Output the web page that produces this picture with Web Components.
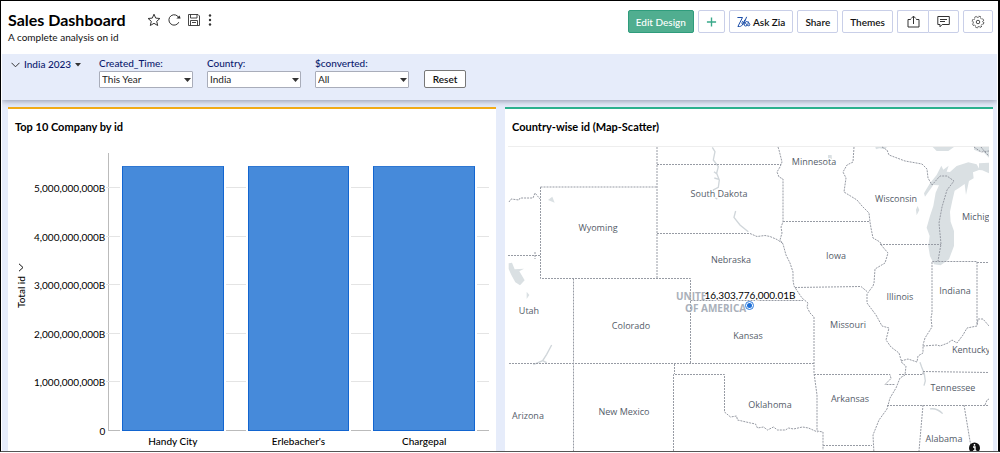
<!DOCTYPE html>
<html lang="en">
<head>
<meta charset="utf-8">
<meta name="viewport" content="width=device-width, initial-scale=1">
<title>Sales Dashboard</title>
<style>
  body {
    margin: 0;
    font-family: Lato, "Open Sans", sans-serif;
    font-size: 10px;
    color: #111;
    background: #fff;
  }
</style>
</head>
<body>
<sales-dashboard></sales-dashboard>

<script>
/**
 * Attaches an open shadow root filled with the given markup.
 * @param {HTMLElement} host - The element that gets the shadow root.
 * @param {string} html - Styles and markup.
 */
function fillShadow (host, html) {
  const template = document.createElement('template');
  template.innerHTML = html;
  host.attachShadow({ mode: 'open' }).appendChild(template.content.cloneNode(true));
}

/**
 * @class ToolButton
 * @classdesc Outlined header button, its icon or text is slotted.
 */
class ToolButton extends HTMLElement {
  constructor () {
    super();
    fillShadow(this, `
    <style>
      :host { display: block; }

      button {
        box-sizing: border-box;
        display: flex;
        align-items: center;
        justify-content: center;
        gap: 2px;
        width: 100%;
        height: 23px;
        padding: 0 7px;
        font: inherit;
        font-weight: 600;
        color: #111;
        background: #fff;
        border: 1px solid #c9cfe8;
        border-radius: 2px;
        white-space: nowrap;
        cursor: pointer;
      }

      :host([primary]) button {
        font-weight: 500;
        color: #fff;
        background: #50ae90;
        border-color: #2f9c7c;
      }

      :host([joined=start]) button { border-radius: 2px 0 0 2px; border-right: 0; }
      :host([joined=end]) button { border-radius: 0 2px 2px 0; }
    </style>
    <button type="button"><slot></slot></button>`);
  }

  connectedCallback () {
    if (this.hasAttribute('label')) {
      this.shadowRoot.querySelector('button').setAttribute('aria-label', this.getAttribute('label'));
    }
  }
}

/**
 * @class DashboardHeader
 * @classdesc Title, description and the toolbar.
 */
class DashboardHeader extends HTMLElement {
  constructor () {
    super();
    fillShadow(this, `
    <style>
      :host {
        display: flex;
        justify-content: space-between;
        align-items: flex-start;
        padding: 9px 5px 8px 7px;
      }

      .heading { display: flex; align-items: center; gap: 21px; }
      h1 { margin: 0; font-size: 16px; line-height: 20px; font-weight: 700; color: #000; }
      p { margin: 0; line-height: 15px; }
      .actions { display: flex; gap: 6px; }

      .actions button {
        display: flex;
        padding: 0;
        border: 0;
        background: none;
        cursor: pointer;
      }

      svg { display: block; fill: none; stroke: #333; }
      .tools { display: flex; gap: 4px; padding-bottom: 13px; }
      .pair { display: flex; }
      .add { width: 27px; }
      .square { width: 31px; }
      .gear { width: 30px; }
    </style>
    <div>
      <div class="heading">
        <h1>Sales Dashboard</h1>
        <div class="actions">
          <button type="button" aria-label="Favourite">
            <svg width="14" height="14" viewBox="0 0 14 14"><path d="M7 1.200l1.700 3.900 4.200.4-3.200 2.800 1 4.200L7 10.300l-3.700 2.200 1-4.200L1.100 5.500l4.200-.4z" stroke-linejoin="round"/></svg>
          </button>
          <button type="button" aria-label="Refresh">
            <svg width="14" height="14" viewBox="0 0 14 14"><path d="M11.800 9.200A5.200 5.200 0 1 1 12 5.200"/><path d="M9.400 5.600h4.200L12.600 2.500z" fill="#333" stroke="none"/></svg>
          </button>
          <button type="button" aria-label="Save">
            <svg width="14" height="14" viewBox="0 0 14 14" stroke-width=".9"><path d="M1.500 1.500h9.500l1.500 1.500v9.500h-11zM3.500 1.500v3.500h6.500v-3.500M3.500 12.500v-5h7v5M5 9.500h4"/></svg>
          </button>
          <button type="button" aria-label="More">
            <svg width="6" height="14" viewBox="0 0 6 14"><g fill="#333" stroke="none"><circle cx="3" cy="2.500" r="1.200"/><circle cx="3" cy="7" r="1.200"/><circle cx="3" cy="11.500" r="1.200"/></g></svg>
          </button>
        </div>
      </div>
      <p>A complete analysis on id</p>
    </div>
    <div class="tools">
      <tool-button primary>Edit Design</tool-button>
      <tool-button class="add" label="Add">
        <svg width="12" height="12" viewBox="0 0 12 12"><path d="M6 1v10M1 6h10" stroke="#3aa98a" stroke-width="1.500"/></svg>
      </tool-button>
      <tool-button>
        <svg width="14" height="12" viewBox="0 0 14 12"><g stroke="#1d4fa8" stroke-linecap="round" stroke-linejoin="round"><path d="M.8 1.500h4.700L.9 10.500c2.200.2 3.400-.2 4.400-1.500l2.500-5"/><path d="M5.400 5.500c-1.200 2.400.2 3.800 1.600 2L9.500 1.200M9.500 5.500c-2.400 1.300-3 4.500-1 4.500 2.300 0 3.300-2.500 2.500-4.500M11 6c1.800.5 2.600 3.800.8 3.800-1.400 0-2.300-1.400-3.600-3"/></g></svg>
        Ask Zia
      </tool-button>
      <tool-button>Share</tool-button>
      <tool-button>Themes</tool-button>
      <div class="pair">
        <tool-button class="square" joined="start" label="Export">
          <svg width="13" height="13" viewBox="0 0 13 13"><path d="M3.800 4.500H1v7.500h11V4.500H9.200M6.500 9V1.200M4.200 3.500l2.300-2.400 2.300 2.400"/></svg>
        </tool-button>
        <tool-button class="square" joined="end" label="Comments">
          <svg width="13" height="13" viewBox="0 0 13 13"><path d="M.8 1.500h11.500v8H5.200L3 11.800V9.500H.8zM3 4.500h7M3 6.500h5"/></svg>
        </tool-button>
      </div>
      <tool-button class="gear" label="Settings">
        <svg width="16" height="16" viewBox="0 0 16 16"><circle cx="8" cy="8" r="6.600" stroke-dasharray="2.800 2.380"/><circle cx="8" cy="8" r="5.400" stroke-dasharray="2.200 2.041" stroke-dashoffset="-2.165"/><circle cx="8" cy="8" r="2"/></svg>
      </tool-button>
    </div>`);
  }
}

/**
 * @class FilterSelect
 * @classdesc Labelled drop-down of the filter bar.
 */
class FilterSelect extends HTMLElement {
  connectedCallback () {
    fillShadow(this, `
    <style>
      :host { display: block; width: 94px; }
      label { display: block; font-weight: 500; line-height: 15px; color: #0b1a6e; }
      .box { display: grid; align-items: center; }

      select {
        grid-area: 1 / 1;
        box-sizing: border-box;
        width: 100%;
        height: 17px;
        padding: 0 14px 0 2px;
        font: inherit;
        line-height: 15px;
        color: #222;
        background: #fff;
        border: 1px solid #a9adba;
        border-radius: 1px;
        appearance: none;
      }

      svg { grid-area: 1 / 1; justify-self: end; margin-right: 2px; pointer-events: none; }
    </style>
    <label for="choice"></label>
    <div class="box">
      <select id="choice"><option></option></select>
      <svg width="7" height="4" viewBox="0 0 7 4"><path d="M0 0h7L3.500 4z" fill="#333"/></svg>
    </div>`);
    this.shadowRoot.querySelector('label').textContent = this.getAttribute('label');
    this.shadowRoot.querySelector('option').textContent = this.getAttribute('value');
  }
}

/**
 * @class FilterBar
 * @classdesc Saved view picker, the filters and the reset button.
 */
class FilterBar extends HTMLElement {
  constructor () {
    super();
    fillShadow(this, `
    <style>
      :host {
        position: relative;
        display: flex;
        align-items: flex-start;
        margin: 0 1px;
        padding: 2px 9px 12px;
        background: #e6ecfa;
        box-shadow: 0 1px 6px #8d93a8;
        clip-path: inset(0 0 -8px);
      }

      .view {
        display: flex;
        align-items: center;
        gap: 4px;
        width: 88px;
        margin-top: 1px;
        padding: 0;
        font: inherit;
        font-weight: 500;
        line-height: 15px;
        color: #0b1a6e;
        background: none;
        border: 0;
        white-space: nowrap;
      }

      .filters { display: flex; gap: 14px; }

      .reset {
        align-self: flex-end;
        width: 42px;
        height: 18px;
        margin-left: 15px;
        padding: 0;
        font: inherit;
        font-weight: 600;
        line-height: 16px;
        color: #111;
        background: #fff;
        border: 1px solid #777;
        border-radius: 2px;
      }
    </style>
    <button class="view" type="button">
      <svg width="9" height="6" viewBox="0 0 9 6"><path d="M.5.8l4 4 4-4" fill="none" stroke="#333"/></svg>
      India 2023
      <svg width="6" height="4" viewBox="0 0 6 4"><path d="M0 0h6L3 3.500z" fill="#333"/></svg>
    </button>
    <div class="filters">
      <filter-select label="Created_Time:" value="This Year"></filter-select>
      <filter-select label="Country:" value="India"></filter-select>
      <filter-select label="$converted:" value="All"></filter-select>
    </div>
    <button class="reset" type="button">Reset</button>`);
  }
}

/**
 * @class ReportCard
 * @classdesc White card with a coloured top edge; the report is slotted.
 */
class ReportCard extends HTMLElement {
  connectedCallback () {
    fillShadow(this, `
    <style>
      :host {
        display: flex;
        flex-direction: column;
        min-width: 0;
        background: #fff;
        border-top: 2px solid var(--edge, #f2ab16);
      }

      h2 { margin: 9px 7px 0; font-size: 11px; line-height: 18px; font-weight: 700; color: #000; }
      ::slotted(*) { flex: 1; }
    </style>
    <h2></h2>
    <slot></slot>`);
    this.shadowRoot.querySelector('h2').textContent = this.getAttribute('heading');
  }
}

/**
 * @class BarChart
 * @classdesc Vertical bars over a ruled plot.
 */
class BarChart extends HTMLElement {
  static ticks = ['5,000,000,000B', '4,000,000,000B', '3,000,000,000B', '2,000,000,000B', '1,000,000,000B', '0'];

  // in millions of B, the plot ends at 5720
  static bars = [['Handy City', 5450], ['Erlebacher\'s', 5450], ['Chargepal', 5450]];

  connectedCallback () {
    const { ticks, bars } = BarChart;

    fillShadow(this, `
    <style>
      :host {
        display: grid;
        grid-template: minmax(180px, 1fr) 20px / 20px 71px 1fr;
        column-gap: 3px;
        padding: 17px 7px 0 3px;
        color: #000;
      }

      /* the padding balances the arrow, so the text stays in the middle */
      .title {
        display: flex;
        align-items: center;
        justify-content: center;
        gap: 5px;
        padding-top: 13px;
        writing-mode: vertical-rl;
        transform: rotate(180deg);
        font-weight: 500;
        line-height: 20px;
      }

      .ticks, .rules {
        display: grid;
        grid-template-rows: 72fr repeat(5, 100fr);
      }

      /* zero height keeps the text centred on its rule */
      .ticks span {
        align-self: end;
        justify-self: end;
        display: flex;
        align-items: center;
        height: 0;
        padding-right: 3px;
        white-space: nowrap;
      }

      .plot { display: grid; grid-template: minmax(0, 1fr) / minmax(0, 1fr); }
      .rules, .bars { grid-area: 1 / 1; }
      .rules { border-left: 1px solid #bbb; }
      .rules i { margin-left: -3px; border-bottom: 1px solid #e4e4e4; }
      .rules i:last-child { margin-left: 0; border-color: #bbb; }

      .bars, .names { display: grid; grid-template-columns: repeat(3, 1fr); padding: 0 2px; }
      .bars { overflow: hidden; }

      .bars div {
        align-self: end;
        box-sizing: border-box;
        margin: 0 12px;
        background: #468ada;
        border: 1px solid #1265d0;
        border-top-color: #2f77d2;
        box-shadow: 0 0 0 2px #fff;
      }

      .names { grid-column: 3; align-items: center; text-align: center; font-weight: 500; }
    </style>
    <div class="title">
      <span>Total id</span>
      <svg width="6" height="9" viewBox="0 0 6 9"><path d="M5 .8L1 4.500l4 3.700" fill="none" stroke="#111"/></svg>
    </div>
    <div class="ticks">${ticks.map(tick => `<span>${tick}</span>`).join('')}</div>
    <div class="plot">
      <div class="rules">${ticks.map(() => '<i></i>').join('')}</div>
      <div class="bars">${bars.map(([, value]) => `<div style="height: ${value / 57.2}%"></div>`).join('')}</div>
    </div>
    <div class="names">${bars.map(([name]) => `<span>${name}</span>`).join('')}</div>`);
  }
}

/**
 * @class ScatterMap
 * @classdesc State map with the scatter point on top.
 */
class ScatterMap extends HTMLElement {
  // [name, centre x, baseline y] in map units
  static states = [
    ['Minnesota', 814, 165], ['South Dakota', 719, 197], ['Wisconsin', 896, 202],
    ['Wyoming', 598, 231], ['Nebraska', 731, 263], ['Iowa', 836, 259],
    ['Indiana', 955, 294], ['Illinois', 900, 300], ['Utah', 529, 314],
    ['Colorado', 631, 329], ['Kansas', 748, 339], ['Missouri', 848, 328],
    ['Tennessee', 953, 391], ['Arkansas', 850, 402], ['Oklahoma', 770, 408],
    ['New Mexico', 624, 415], ['Arizona', 528, 419], ['Alabama', 944, 442]
  ];

  connectedCallback () {
    const names = ScatterMap.states
      .map(([name, x, y]) => `<text x="${x}" y="${y}" text-anchor="middle">${name}</text>`)
      .join('');

    fillShadow(this, `
    <style>
      :host { display: grid; min-height: 200px; padding: 10px 4px 0 3px; }
      svg { display: block; width: 100%; height: 100%; min-height: 0; contain: size; }
      .water { fill: #dae0e3; stroke: none; }
      .river { fill: none; stroke: #d0d6da; stroke-width: 4; }
      .borders { fill: none; stroke: #979ba4; stroke-dasharray: 2 1; }
      .names { font: 9px "Open Sans", "Noto Sans", sans-serif; fill: #545c69; stroke: #fff; stroke-width: 2; paint-order: stroke; }
      .country { font: 700 10px "Open Sans", "Noto Sans", sans-serif; fill: #aab0ba; }
      .value { font-size: 10px; font-weight: 400; fill: #000; stroke: #fff; stroke-width: 2; paint-order: stroke; }
    </style>
    <svg viewBox="508 146 481 305" preserveAspectRatio="xMinYMin slice">
      <path d="M508 146.500h481" stroke="#eee"/>
      <g transform="translate(750 100) scale(.3333)">
        <path class="water" d="M550 255L525 290l-3-10 18-30 20-25 14-28 6 12 16-12-6 18 10 1 20-18 35-11 25 6 9 16-20 8 2 18-14 8-9 42-4-33-17 12-13 8-7 30-7 33 2 30 10 28v45l-15 40-25 18-20-3-12-25-5-30 4-30-9-25 10-35 10-30 7-40 10-22zM687 190l30-2v32l-20-9-10-1zM548 141h64l-17 12h-35zM672 141h45v32l-20-20-10 2-15-6zM503 318l5 12-8 16-2-17zM234 165h11l1 16-12-2zM376 141h36l-10 6-14-2-10 3z"/>
        <path class="river" d="M510 402l5 14 8 20 3 22-4 14" transform="translate(0 385)"/>
        <path class="river" d="M540 927q20-4 38 14"/>
      </g>
      <g transform="translate(500 100) scale(.3333)">
        <path class="water" d="M26 490l10-2 8 20 28-2-14 8 16 27-14 15-14-9-12-22-8-18zM80 575l8 10-8 12zM144 300l13-10 7 18z"/>
        <path class="river" d="M637 142l8 13-5 25 15 20-5 20 8 20-3 22-15 8 2 20 10 8M642 215l10 8M643 234l14 4M707 333l-5 19 18 23 25 20M155 735l-15 28-12 19-28 12M128 782l12 6"/>
      </g>
      <g class="borders">
        <path d="M509 202l2-3 8 1 1-2h13l2-5 5 6M540.500 187H657M540.500 187v91.500H690.500V364M657 147v131M508 255.500h32M535 252v7"/>
        <path d="M657 164.500H781M657 233.500h93l7 3 8-1 5 1 7 3 6 4"/>
        <path d="M778 147l1 3 3 12-2 5-3 5 2 5 4 2v43l-2 5 1 6-2 7 3 4 3 11 4 8 3 9v8l1 6 8 12 6 5-1 4 3 6 4 4v56l3 22v36l6 1v18M783 221.500H870M823 445.500H872"/>
        <path d="M573.500 278.500V451M509 363.500H814M690.500 300.500H803M674.500 364v10M673.500 451V374.500h51V412l6 5 6-1 1 4 13 3 5 1 2 4 6-1 4 3 6-3 4 3h8l3-2 5 1 9-2 6 1 9 4"/>
        <path d="M854 147l-1 15-6 3-4 7 3 6-2 14 13 8 5 6 7 7 1 9 1 6 2 10 7 4 2 4 6 7-3 10-10 6-1 14-1 3-6 8v9l9 12 6 11 7 2-3 12 5 7 8 6 3 10 4 3-1 9-5 3-4 10-6 10-3 11-8 11-6 15 1 19"/>
        <path d="M795 287.500l66-1 6 5M814 374.500h76l1 4-6 6h10M901 361l7-2 9 3 1-6 5-3v-8l2-7 7-11-1-9 1-5V261.500h45V325M880 244.500h61M977 262.500h12"/>
        <path d="M923 346l14-1 3 1 8-3 4-3 5 3 6-8 4-7 10-2 1-7h5l6 7M899 374.500h24v-3l66 1M887 405.500h102M985 405l2-5 2-1M923 405l-4 46M964 405l6 36 2 10"/>
        <path d="M882 147l5 3 2 5 16 6 17 3 5 5 1 9 4 7 8-9h7l7 5-7 9-5 17-3 16 2 21-3 17M974 147l7 5 8-1M981 147l4 5 4 4"/>
      </g>
      <g class="country"><text x="676" y="300">UNITE</text><text x="685" y="312">OF AMERICA</text></g>
      <g class="names">${names}<text x="962" y="220">Michigan</text><text x="952" y="353">Kentucky</text></g>
      <circle cx="749.500" cy="305.500" r="4" fill="#fff" stroke="#2f7bdc"/>
      <circle cx="749.500" cy="305.500" r="2.500" fill="#1d6fd8"/>
      <text class="value" x="750" y="299" text-anchor="middle">16,303,776,000.01B</text>
      <g><circle cx="974.500" cy="448" r="5.500" fill="#111"/><path d="M974.500 444v1.700M973 447h2v4h-1.500M973 451h3.500" fill="none" stroke="#fff" stroke-width="1.400"/></g>
    </svg>`);
  }
}

/**
 * @class SalesDashboard
 * @classdesc The whole framed page.
 */
class SalesDashboard extends HTMLElement {
  constructor () {
    super();
    fillShadow(this, `
    <style>
      :host {
        box-sizing: border-box;
        display: flex;
        flex-direction: column;
        min-height: calc(100vh - 1px);
        border: 1px solid #000;
        border-right-width: 2px;
        border-bottom-color: #555;
      }

      main {
        flex: 1;
        display: grid;
        grid-template-columns: minmax(0, 1fr) minmax(0, 1fr);
        gap: 9px;
        margin: 0 1px;
        padding: 7px 4px 0 6px;
        background: #e6ecfa;
      }

      .map-card { --edge: #2bb18d; }
    </style>
    <dashboard-header></dashboard-header>
    <filter-bar></filter-bar>
    <main>
      <report-card heading="Top 10 Company by id"><bar-chart></bar-chart></report-card>
      <report-card class="map-card" heading="Country-wise id (Map-Scatter)"><scatter-map></scatter-map></report-card>
    </main>`);
  }
}

customElements.define('tool-button', ToolButton);
customElements.define('dashboard-header', DashboardHeader);
customElements.define('filter-select', FilterSelect);
customElements.define('filter-bar', FilterBar);
customElements.define('report-card', ReportCard);
customElements.define('bar-chart', BarChart);
customElements.define('scatter-map', ScatterMap);
customElements.define('sales-dashboard', SalesDashboard);
</script>
</body>
</html>
